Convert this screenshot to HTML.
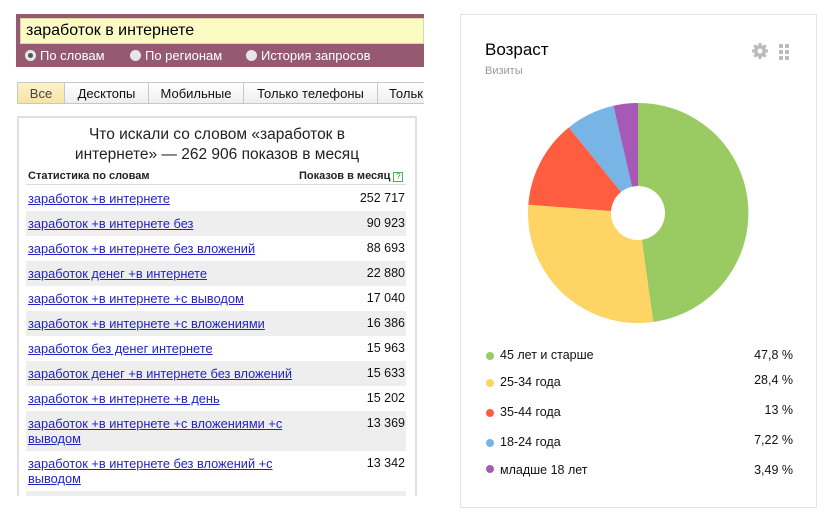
<!DOCTYPE html>
<html><head><meta charset="utf-8"><style>
*{margin:0;padding:0;box-sizing:border-box}
body{width:833px;height:523px;background:#fff;font-family:"Liberation Sans",Arial,sans-serif;position:relative;overflow:hidden}
.a{position:absolute}
.bar{left:16px;top:14px;width:408px;height:53px;background:#955a70}
.inp{left:20px;top:18px;width:404px;height:26px;background:#fbfbc4;border:1px solid #d8d8a0;font-size:16px;padding:3px 0 0 5px;color:#000}
.rad{top:48px;font-size:13px;color:#fff}
.rad i{display:inline-block;width:11px;height:11px;border-radius:50%;background:#e6e6e6;vertical-align:-1px;margin-right:4px}
.tab{top:82px;height:22px;border:1px solid #c8c8c8;border-left:none;background:linear-gradient(#fff,#eee);font-size:13px;text-align:center;padding-top:3px;color:#111}
.box{left:17px;top:116px;width:400px;height:380px;border:2px solid #e0e0e0;border-bottom:none}
.ttl{left:62px;top:125px;width:310px;text-align:center;font-size:15.5px;line-height:20px;color:#222}
.hd{top:170px;font-size:11px;font-weight:bold;color:#222}
.row{left:26px;width:380px;font-size:12.8px;line-height:15px}
.row a{color:#2323c8;text-decoration:underline;position:absolute;left:2px;top:5px;width:270px}
.row span{position:absolute;right:1px;top:5px;color:#111;font-size:12.5px}
.g{background:#eee}
.card{left:460px;top:14px;width:357px;height:494px;border:1px solid #e3e3e3}
.leg{left:486px;font-size:12.5px;color:#111}
.leg i{position:absolute;left:0;top:4px;width:8px;height:8px;border-radius:50%}
.leg b{font-weight:normal;position:absolute;left:14px;top:0;white-space:nowrap}
.pct{right:40px;font-size:12.5px;color:#111}
</style></head><body>
<div class="a bar"></div>
<div class="a inp">заработок в интернете</div>
<div class="a rad" style="left:25px"><i style="background:#e6e6e6;box-shadow:inset 0 0 0 3px #e6e6e6,inset 0 0 0 6px #555"></i>По словам</div>
<div class="a rad" style="left:130px"><i></i>По регионам</div>
<div class="a rad" style="left:246px"><i></i>История запросов</div>
<div class="a tab" style="left:17px;width:48px;border-left:1px solid #c8c8c8;background:linear-gradient(#fdf2c8,#f6e3a6);color:#444">Все</div>
<div class="a tab" style="left:65px;width:84px">Десктопы</div>
<div class="a tab" style="left:149px;width:95px">Мобильные</div>
<div class="a tab" style="left:244px;width:134px">Только телефоны</div>
<div class="a tab" style="left:378px;width:46px;text-align:left;padding-left:11px;border-right:none">Тольк</div>
<div class="a box"></div>
<div class="a ttl">Что искали со словом «заработок в интернете» — 262 906 показов в месяц</div>
<div class="a hd" style="left:28px">Статистика по словам</div>
<div class="a hd" style="left:299px">Показов в месяц <span style="display:inline-block;width:10px;height:10px;border:1px solid #5a5;font-size:8px;line-height:8px;text-align:center;color:#393;font-weight:normal">?</span></div>
<div class="a" style="left:26px;top:184px;width:380px;height:1px;background:#ddd"></div>
<div class="a row" style="top:186px;height:25px"><a>заработок +в интернете</a><span>252 717</span></div>
<div class="a row g" style="top:211px;height:25px"><a>заработок +в интернете без</a><span>90 923</span></div>
<div class="a row" style="top:236px;height:25px"><a>заработок +в интернете без вложений</a><span>88 693</span></div>
<div class="a row g" style="top:261px;height:25px"><a>заработок денег +в интернете</a><span>22 880</span></div>
<div class="a row" style="top:286px;height:25px"><a>заработок +в интернете +с выводом</a><span>17 040</span></div>
<div class="a row g" style="top:311px;height:25px"><a>заработок +в интернете +с вложениями</a><span>16 386</span></div>
<div class="a row" style="top:336px;height:25px"><a>заработок без денег интернете</a><span>15 963</span></div>
<div class="a row g" style="top:361px;height:25px"><a>заработок денег +в интернете без вложений</a><span>15 633</span></div>
<div class="a row" style="top:386px;height:25px"><a>заработок +в интернете +в день</a><span>15 202</span></div>
<div class="a row g" style="top:411px;height:40px"><a>заработок +в интернете +с вложениями +с выводом</a><span>13 369</span></div>
<div class="a row" style="top:451px;height:40px"><a>заработок +в интернете без вложений +с выводом</a><span>13 342</span></div>
<div class="a row g" style="top:491px;height:5px"></div>

<div class="a card"></div>
<div class="a" style="left:485px;top:40px;font-size:17px;color:#000">Возраст</div>
<div class="a" style="left:485px;top:65px;font-size:11px;color:#999">Визиты</div>
<svg class="a" style="left:750px;top:41px" width="40" height="20" viewBox="0 0 40 20">
<g fill="#bbb"><circle cx="10" cy="10" r="6"/><g stroke="#bbb" stroke-width="3"><line x1="10" y1="2" x2="10" y2="18"/><line x1="2" y1="10" x2="18" y2="10"/><line x1="4.3" y1="4.3" x2="15.7" y2="15.7"/><line x1="15.7" y1="4.3" x2="4.3" y2="15.7"/></g><circle cx="10" cy="10" r="2.5" fill="#fff"/>
<rect x="29" y="3" width="4" height="4"/><rect x="35" y="3" width="4" height="4"/><rect x="29" y="9" width="4" height="4"/><rect x="35" y="9" width="4" height="4"/><rect x="29" y="15" width="4" height="4"/><rect x="35" y="15" width="4" height="4"/></g></svg>
<svg class="a" style="left:0;top:0" width="833" height="523">
<path d="M638 213L638 103A110 110 0 0 1 653.2 322Z" fill="#9acb63"/>
<path d="M638 213L653.2 322A110 110 0 0 1 528.3 204.7Z" fill="#fed565"/>
<path d="M638 213L528.3 204.7A110 110 0 0 1 568.9 127.4Z" fill="#fe5e3f"/>
<path d="M638 213L568.9 127.4A110 110 0 0 1 613.5 105.8Z" fill="#78b5e6"/>
<path d="M638 213L613.5 105.8A110 110 0 0 1 638 103Z" fill="#a659b5"/>
<circle cx="638" cy="213" r="27" fill="#fff"/>
</svg>
<div class="a leg" style="top:348px"><i style="background:#9acb63"></i><b>45 лет и старше</b></div>
<div class="a leg" style="top:375px"><i style="background:#fed565"></i><b>25-34 года</b></div>
<div class="a leg" style="top:405px"><i style="background:#fe5e3f"></i><b>35-44 года</b></div>
<div class="a leg" style="top:435px"><i style="background:#78b5e6"></i><b>18-24 года</b></div>
<div class="a leg" style="top:463px"><i style="background:#a659b5;top:2px"></i><b>младше 18 лет</b></div>
<div class="a pct" style="top:348px">47,8 %</div>
<div class="a pct" style="top:373px">28,4 %</div>
<div class="a pct" style="top:403px">13 %</div>
<div class="a pct" style="top:433px">7,22 %</div>
<div class="a pct" style="top:463px">3,49 %</div>
</body></html>
